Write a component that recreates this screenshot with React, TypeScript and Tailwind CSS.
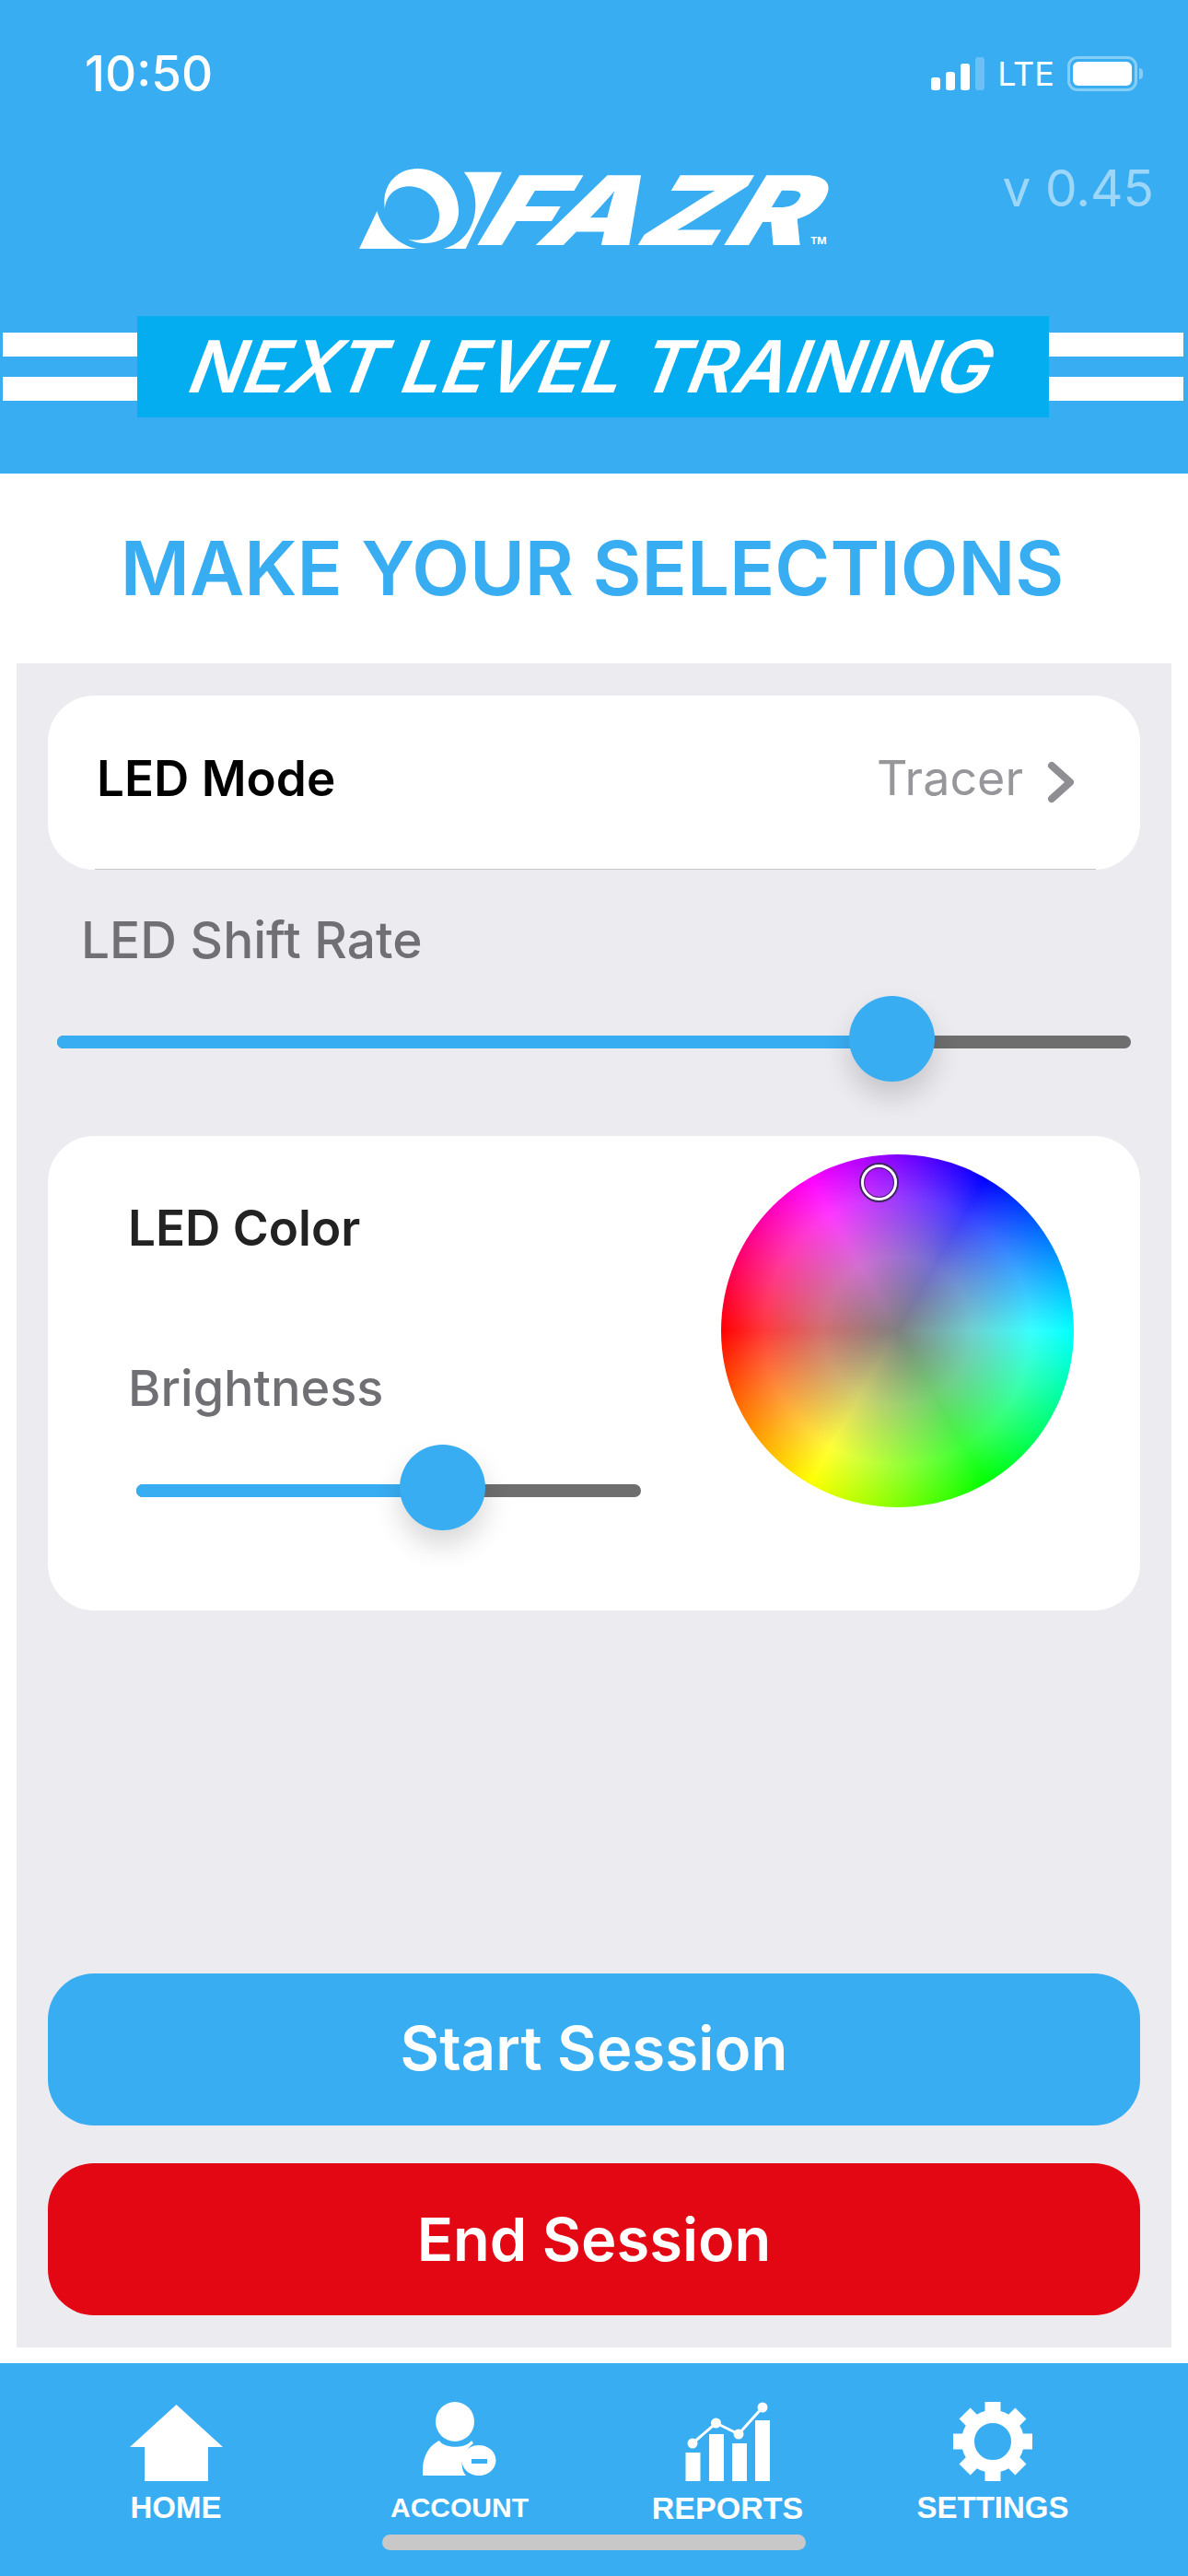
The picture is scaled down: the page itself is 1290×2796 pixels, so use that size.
const blue = 'bg-[#38adf2]'

function Signal() {
  return (
    <div className="flex items-end gap-[6px]">
      <div className="h-[14px] w-[10px] rounded-[3px] bg-white" />
      <div className="h-[20px] w-[10px] rounded-[3px] bg-white" />
      <div className="h-[29px] w-[10px] rounded-[3px] bg-white" />
      <div className="h-[36px] w-[10px] rounded-[3px] bg-white/25" />
    </div>
  )
}

function Battery() {
  return (
    <div className="flex items-center gap-[2px]">
      <div className="h-[38px] w-[76px] rounded-[11px] border-[3px] border-white/40 p-[3px]">
        <div className="h-full w-full rounded-[6px] bg-white" />
      </div>
      <div className="h-[12px] w-[4px] rounded-r-full bg-white/40" />
    </div>
  )
}

function LogoMark() {
  return (
    <svg viewBox="132 97 406 261" preserveAspectRatio="none" className="h-[87px] w-[155px]" fill="#fff">
      <path d="M205 228C195 150 240 97 298 97C365 97 415 160 415 235C415 295 375 340 320 340C305 340 285 335 272 327C330 340 360 300 360 250C360 200 320 155 275 155C235 155 208 185 205 228Z" />
      <path d="M183 235C195 290 240 345 295 358L132 358Z" />
      <path d="M430 108L538 108L435 358L372 358C430 340 463 285 463 215C463 175 450 135 430 108Z" />
    </svg>
  )
}

function Stripes() {
  return (
    <div className="flex w-[146px] flex-col gap-[22px]">
      <div className="h-[26px] bg-white" />
      <div className="h-[26px] bg-white" />
    </div>
  )
}

function Slider({ fill, width }: { fill: string; width: string }) {
  return (
    <div className={`relative flex h-[14px] items-center rounded-full bg-[#6e6e6e] ${width}`}>
      <div className={`h-[14px] rounded-full bg-[#38adf2] ${fill}`} />
      <div className="absolute top-[-43px] size-[93px] rounded-full bg-[#38adf2] shadow-[0_16px_30px_rgba(0,0,0,0.16)] [left:var(--thumb)]" />
    </div>
  )
}

function ColorWheel() {
  return (
    <div className="relative size-[383px] rounded-full bg-[image:radial-gradient(circle_closest-side,#808080_0%,rgba(180,180,180,0.62)_42%,rgba(255,255,255,0.22)_76%,rgba(255,255,255,0)_100%),conic-gradient(from_90deg,#0ff,#0f0,#ff0,#f00,#f0f,#00f,#0ff)]">
      <div className="absolute left-[150px] top-[9px] size-[43px] rounded-full border-2 border-[#3a2a55]">
        <div className="size-full rounded-full border-[3px] border-white">
          <div className="size-full rounded-full border border-[#3a2a55]" />
        </div>
      </div>
    </div>
  )
}

function HomeIcon() {
  return (
    <svg viewBox="0 0 101 83" className="h-[83px] w-[101px]" fill="#fff">
      <path d="M50.500 0L101 46H85V83H16V46H0Z" />
    </svg>
  )
}

function AccountIcon() {
  return (
    <svg viewBox="461 2607 80 80" className="mb-[6px] h-[80px] w-[80px]" fill="#fff">
      <ellipse cx="496" cy="2628.500" rx="21" ry="21.500" />
      <path d="M461 2687C460 2670 465 2656 479 2649C484 2658 508 2658 514 2649L516 2652C505 2660 499 2676 508 2687Z" />
      <path fillRule="evenodd" d="M522 2654A18.500 16.500 0 1 1 521.900 2654ZM514 2669V2674H531V2669Z" />
    </svg>
  )
}

function ReportsIcon() {
  return (
    <svg viewBox="744 2607 92 87" className="h-[87px] w-[92px]" fill="#fff">
      <rect x="744.500" y="2663" width="16" height="31" />
      <rect x="770" y="2643" width="16" height="51" />
      <rect x="795" y="2653" width="16" height="41" />
      <rect x="820" y="2628" width="16" height="66" />
      <path d="M752 2653L777.500 2631L802 2643L828 2614" fill="none" stroke="#fff" strokeWidth="3" />
      <circle cx="752" cy="2653" r="5.500" />
      <circle cx="777.500" cy="2631" r="5.500" />
      <circle cx="802" cy="2643" r="5.500" />
      <circle cx="828" cy="2614" r="5.500" />
    </svg>
  )
}

function GearIcon() {
  const angles = [0, 45, 90, 135, 180, 225, 270, 315]
  return (
    <svg viewBox="-43 -43 86 86" className="size-[86px]">
      <circle cx="0" cy="0" r="27" fill="none" stroke="#fff" strokeWidth="14" />
      {angles.map((angle) => (
        <path key={angle} d="M-8.500 -43H8.500V-26H-8.500Z" fill="#fff" transform={`rotate(${angle})`} />
      ))}
    </svg>
  )
}

function TabItem({ label, icon, labelSize }: { label: string; icon: React.ReactNode; labelSize: string }) {
  return (
    <div className="flex flex-col items-center">
      <div className="flex h-[92px] items-end">{icon}</div>
      <span className={`mt-[10px] font-['Liberation_Sans',sans-serif] font-bold leading-[38px] text-white ${labelSize}`}>{label}</span>
    </div>
  )
}

export default function App() {
  return (
    <div className="relative flex h-[2796px] w-[1290px] flex-col overflow-hidden bg-white font-['Inter',sans-serif]">
      <header className={`h-[514px] ${blue} relative`}>
        <div className="flex h-[140px] items-start justify-between pl-[92px] pr-[49px] pt-[50px]">
          <span className="text-[53px] font-medium leading-[60px] text-white">10:50</span>
          <div className="flex items-center gap-[14px] pt-[10px]">
            <Signal />
            <span className="text-[36px] leading-[40px] text-white">LTE</span>
            <Battery />
          </div>
        </div>
        <span className="absolute right-[37px] top-[172px] text-[55px] leading-[64px] text-white/50">v 0.45</span>
        <span className="absolute left-[880px] top-[255px] text-[11px] font-bold leading-[12px] text-white">TM</span>
        <div className="mt-[28px] flex items-end pl-[390px]">
          <LogoMark />
          <span className="relative mb-[-18px] ml-[-10px] origin-left -skew-x-[25deg] scale-x-[1.3] text-[104px] font-black leading-[120px] text-white">
            FAZR
          </span>
        </div>
        <div className="mt-[73px] flex items-center">
          <div className="ml-[3px]"><Stripes /></div>
          <div className="flex h-[110px] w-[990px] items-center justify-center bg-[#03adf0]">
            <span className="shrink-0 -skew-x-[21deg] whitespace-nowrap text-[78px] font-semibold leading-none text-white">
              NEXT LEVEL TRAINING
            </span>
          </div>
          <Stripes />
        </div>
      </header>

      <h1 className="flex h-[206px] items-center justify-center pr-[4px] text-[81.500px] font-semibold text-[#38adf2]">MAKE YOUR SELECTIONS</h1>

      <main className="mx-[18px] flex h-[1828px] flex-col bg-[#ebebf0] px-[34px] pt-[35px]">
        <div className="relative flex h-[189px] items-start justify-between rounded-[50px] bg-white pl-[53px] pr-[71px] pt-[60px]">
          <span className="text-[53px] font-semibold leading-[60px] text-black">LED Mode</span>
          <div className="flex items-center gap-[26px]">
            <span className="text-[52px] leading-[60px] text-[#96969b]">Tracer</span>
            <svg viewBox="0 0 30 46" className="mt-[8px] h-[46px] w-[30px]" fill="none" stroke="#8e8e93" strokeWidth="8" strokeLinecap="round" strokeLinejoin="round">
              <path d="M5 5L25 23L5 41" />
            </svg>
          </div>
          <div className="absolute bottom-0 left-[51px] right-[48px] h-[1px] bg-[#c8c8cc]" />
        </div>

        <span className="ml-[36px] mt-[46px] text-[55px] font-medium leading-[60px] text-[#707074]">LED Shift Rate</span>
        <div className="ml-[10px] mt-[74px] [--thumb:860px]">
          <Slider fill="w-[880px]" width="w-[1166px]" />
        </div>

        <div className="mt-[95px] flex h-[515px] rounded-[50px] bg-white pl-[87px] pt-[20px]">
          <div className="flex w-[644px] flex-col pt-[50px]">
            <span className="text-[53px] font-semibold leading-[60px] text-[#222]">LED Color</span>
            <span className="mt-[114px] text-[54px] font-medium leading-[60px] text-[#707074]">Brightness</span>
            <div className="ml-[9px] mt-[74px] [--thumb:286px]">
              <Slider fill="w-[300px]" width="w-[548px]" />
            </div>
          </div>
          <ColorWheel />
        </div>

        <button className="mt-[394px] h-[165px] rounded-[50px] bg-[#38adf2] text-center text-[65.500px] font-semibold text-white">Start Session</button>
        <button className="mt-[41px] h-[165px] rounded-[50px] bg-[#e30613] text-center text-[65px] font-semibold text-white">End Session</button>
      </main>

      <nav className={`mt-[17px] flex-1 ${blue} relative pt-[36px]`}>
        <div className="grid grid-cols-[300px_316px_266px_310px] pl-[41px]">
          <TabItem label="HOME" labelSize="text-[33px]" icon={<HomeIcon />} />
          <TabItem label="ACCOUNT" labelSize="text-[30px]" icon={<AccountIcon />} />
          <TabItem label="REPORTS" labelSize="text-[34px]" icon={<ReportsIcon />} />
          <TabItem label="SETTINGS" labelSize="text-[33px]" icon={<GearIcon />} />
        </div>
        <div className="absolute bottom-[28px] left-[415px] h-[17px] w-[460px] rounded-full bg-[#c8c8c8]" />
      </nav>
    </div>
  )
}
